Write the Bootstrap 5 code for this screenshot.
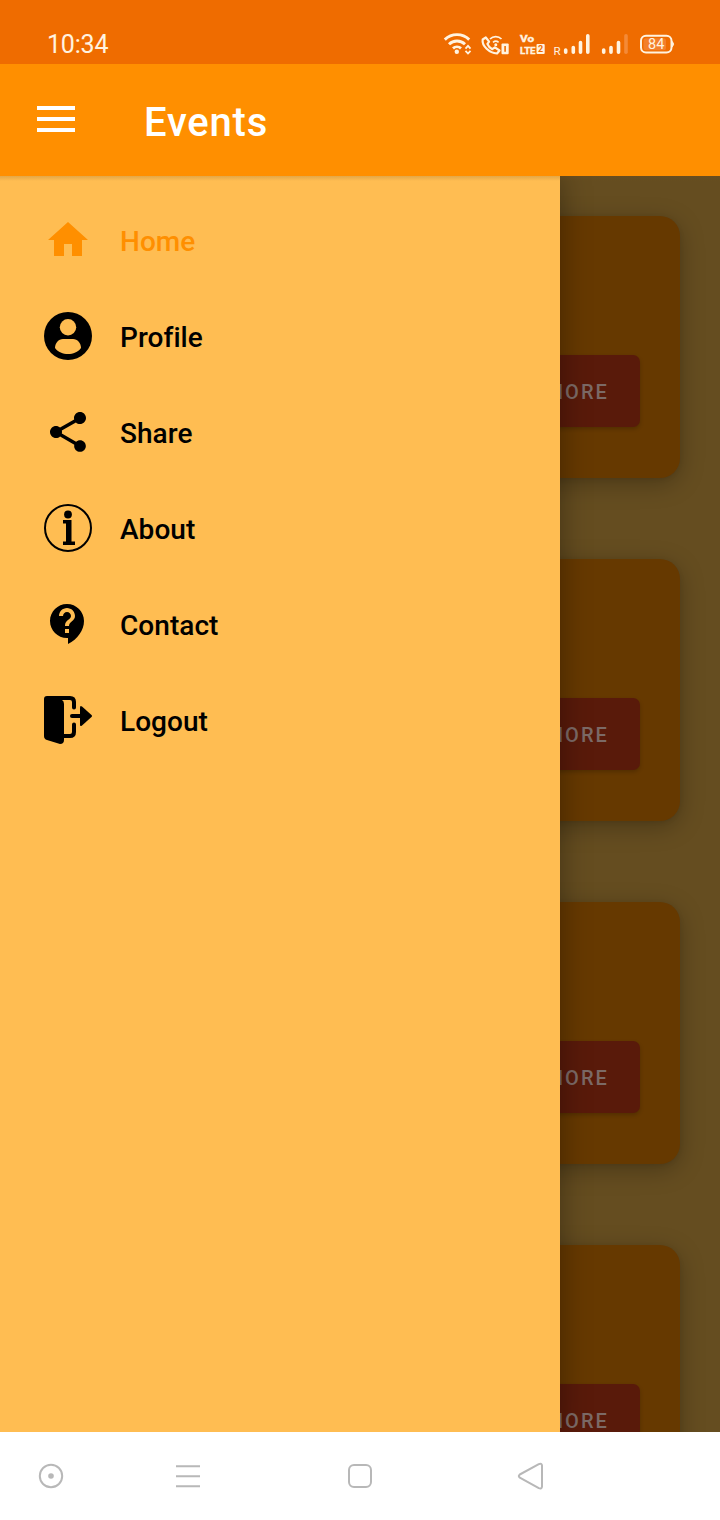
<!DOCTYPE html>
<html lang="en">
<head>
<meta charset="utf-8">
<meta name="viewport" content="width=device-width, initial-scale=1">
<title>Events</title>
<link href="https://cdn.jsdelivr.net/npm/bootstrap@5.3.0/dist/css/bootstrap.min.css" rel="stylesheet">
<style>
  body { font-family: Roboto, "Liberation Sans", sans-serif; }
  svg { display: block; flex-shrink: 0; }
  .screen { height: 1520px; width: 720px; }
  .status-bar { height: 64px; background: #ef6c00; padding-left: 47px; padding-right: 40px; color: #fff3e0; }
  .clock { font-size: 25px; line-height: 30px; padding-top: 30px; letter-spacing: -.2px; }
  .app-bar { height: 112px; background: #ff8f00; padding-left: 37px; }
  .app-title { font-size: 40px; font-weight: 500; line-height: 48px; margin: 5px 0 0 69px; letter-spacing: .8px; }
  .menu-icon { margin-top: -3px; }
  .stage { height: 1256px; background: #654d20; }
  .event-list { padding: 40px; gap: 81px; }
  .event-card { height: 262px; flex-shrink: 0; background: #663900; border-radius: 20px; padding: 0 40px 51px; box-shadow: 0 6px 24px rgba(0,0,0,.26), 0 1px 5px rgba(0,0,0,.08); }
  .more-btn { width: 176px; height: 72px; border-radius: 7px; background: #591a0a; color: #7c6a66; font-size: 20px; font-weight: 500; letter-spacing: 2.1px; padding: 2px 31px 0 0; border: 0; box-shadow: 0 2px 4px rgba(0,0,0,.2); }
  .drawer { width: 560px; background: #ffbd52; padding-top: 16px; box-shadow: 0 0 28px rgba(0,0,0,.36); }
  .bar-shade { height: 5px; background: linear-gradient(rgba(120,80,30,.2), rgba(120,80,30,0)); }
  .drawer-link { height: 96px; padding: 0 0 0 44px; gap: 28px; font-size: 28px; font-weight: 500; color: #000; line-height: 34px; letter-spacing: .05px; }
  .drawer-link span { padding-top: 3px; }
  .drawer-link.active { color: #ff8f00; }
  .sys-nav { height: 88px; background: #fff; padding-left: 37px; }
</style>
</head>
<body class="m-0">
<div class="screen d-flex flex-column overflow-hidden">
  <header class="status-bar d-flex justify-content-between">
    <div class="clock">10:34</div>
    <svg width="240" height="64" viewBox="440 0 240 64" fill="none" stroke="#fff3e0" font-family="Roboto, sans-serif">
      <!-- wifi -->
      <g stroke-width="2.9">
        <path d="M444.8 39.6a17.5 17.5 0 0 1 24.4 0M449 44.2a11.5 11.5 0 0 1 16 0M453 48.4a6 6 0 0 1 8 0"/>
        <circle cx="456.8" cy="51.8" r="2.2" fill="#fff3e0" stroke="none"/>
        <path d="M465.5 48.6l2.5-2.7 2.5 2.7M465.5 50.8l2.5 2.7 2.5-2.7" stroke-width="1.8"/>
      </g>
      <!-- wifi calling -->
      <path d="M485.8 37.500l-3.100 2c-1 6.600 6.700 13.400 14.300 14l2.500-3-4.600-3.200-2.600 1.900c-2.500-1.200-4-3-4.900-5.300l1.700-2.300z" stroke-width="2.200" stroke-linejoin="round"/>
      <path d="M490 39a8 8 0 0 1 11.500 0M493 42.300a4.500 4.500 0 0 1 5.600 0" stroke-width="1.700"/>
      <circle cx="495.800" cy="44.800" r="1.500" fill="#fff3e0" stroke="none"/>
      <rect x="501.500" y="43.600" width="7.200" height="10.600" rx="1" fill="#fff3e0" stroke="none"/><path d="M505.100 46v5.800" stroke="#ef6c00" stroke-width="1.600"/>
      <!-- VoLTE -->
      <g fill="#fff3e0" stroke="none" font-weight="700">
        <g stroke="#fff3e0" stroke-width=".4" font-size="9.400">
          <text x="520" y="42.300" textLength="14" lengthAdjust="spacingAndGlyphs">Vo</text>
          <text x="520" y="53.500" textLength="15.500" lengthAdjust="spacingAndGlyphs">LTE</text>
        </g>
        <rect x="536.500" y="44" width="8.200" height="10" rx="1"/>
        <text x="538" y="52.300" font-size="9" fill="#ef6c00">2</text>
        <text x="553.500" y="54.600" font-size="11.500" font-weight="400">R</text>
      </g>
      <!-- signal strength -->
      <g stroke-width="3.600" stroke-linecap="round">
        <path d="M565.700 50.100v2.200M573.300 47.500v4.800M580.500 42.500v9.800M587.800 35.800v16.500M603.700 50.100v2.200M611 47.500v4.800M618.500 42.500v9.800"/>
        <path d="M626 35.800v16.500" stroke="#f48a37"/>
      </g>
      <!-- battery -->
      <rect x="641" y="35.800" width="30.500" height="16.800" rx="5" stroke-width="2"/>
      <path d="M672.300 41.500q2.600 2.600 0 5.300z" fill="#fff3e0" stroke-width="1"/>
      <rect x="643.500" y="38.200" width="22.500" height="12" rx="2.500" fill="#f3802b" stroke="none"/>
      <text x="648" y="49" font-size="14.500" fill="#fff3e0" stroke="none">84</text>
    </svg>
  </header>

  <nav class="app-bar d-flex align-items-center text-white">
    <svg class="menu-icon" width="38" height="28" viewBox="0 0 38 28" fill="#fff"><path d="M0 1h38v4H0zM0 12h38v4H0zM0 23h38v4H0z"/></svg>
    <h1 class="app-title mb-0">Events</h1>
  </nav>

  <main class="stage position-relative overflow-hidden">
    <div class="event-list d-flex flex-column">
      <div class="event-card d-flex align-items-end justify-content-end"><button class="more-btn text-end">MORE</button></div>
      <div class="event-card d-flex align-items-end justify-content-end"><button class="more-btn text-end">MORE</button></div>
      <div class="event-card d-flex align-items-end justify-content-end"><button class="more-btn text-end">MORE</button></div>
      <div class="event-card d-flex align-items-end justify-content-end"><button class="more-btn text-end">MORE</button></div>
    </div>
    <aside class="drawer position-absolute top-0 start-0 h-100">
      <div class="nav flex-column">
        <a class="drawer-link active nav-link d-flex align-items-center" href="#">
          <svg width="48" height="48" viewBox="0 0 24 24" fill="currentColor"><path d="M10 20v-6h4v6h5v-8h3L12 3 2 12h3v8z"/></svg><span>Home</span></a>
        <a class="drawer-link nav-link d-flex align-items-center" href="#">
          <svg width="48" height="48" viewBox="0 0 48 48"><circle cx="24" cy="24" r="24"/><g fill="#ffbd52"><circle cx="24" cy="15.200" r="8.200"/><path d="M11 36c0-5 3.500-9 8-9h10c4.500 0 8 4 8 9-3 4-8 6-13 6s-10-2-13-6z"/></g></svg><span>Profile</span></a>
        <a class="drawer-link nav-link d-flex align-items-center" href="#">
          <svg width="48" height="48" viewBox="0 0 24 24" fill="currentColor"><path d="M18 16.080c-.76 0-1.440.3-1.960.77L8.910 12.700c.05-.23.09-.46.09-.7s-.04-.47-.09-.7l7.050-4.110c.54.5 1.250.81 2.040.81 1.660 0 3-1.340 3-3s-1.340-3-3-3-3 1.340-3 3c0 .24.04.47.09.7L8.040 9.810C7.500 9.310 6.790 9 6 9c-1.660 0-3 1.340-3 3s1.340 3 3 3c.79 0 1.500-.31 2.040-.81l7.120 4.160c-.05.21-.08.43-.08.65 0 1.610 1.310 2.920 2.920 2.920s2.920-1.310 2.920-2.920-1.310-2.920-2.920-2.920z"/></svg><span>Share</span></a>
        <a class="drawer-link nav-link d-flex align-items-center" href="#">
          <svg width="48" height="48" viewBox="0 0 48 48"><circle cx="24" cy="24" r="23" fill="none" stroke="#000" stroke-width="2"/><circle cx="24" cy="10.500" r="3.900"/><path d="M19 16h8.500v21.500H31V41H19v-3.500h3V19.500h-3z"/></svg><span>About</span></a>
        <a class="drawer-link nav-link d-flex align-items-center" href="#">
          <svg width="48" height="48" viewBox="0 0 24 24" fill="currentColor"><path d="M11.500 2C6.810 2 3 5.810 3 10.500S6.810 19 11.500 19h.5v3c4.860-2.340 8-7 8-11.500C20 5.810 16.190 2 11.500 2zm1 14.500h-2v-2h2v2zm0-3.500h-2c0-3.250 3-3 3-5 0-1.100-.9-2-2-2s-2 .9-2 2h-2c0-2.210 1.790-4 4-4s4 1.790 4 4c0 2.500-3 2.750-3 5z"/></svg><span>Contact</span></a>
        <a class="drawer-link nav-link d-flex align-items-center" href="#">
          <svg width="48" height="48" viewBox="0 0 48 48"><path d="M3 0h15v4q2 1 2 4v36q0 4-4 4L3 44q-3-1-3-4V3q0-3 3-3z"/><path d="M17 2h9q4 0 4 4v5.500M30 28.500v7.500q0 4-4 4h-7" fill="none" stroke="#000" stroke-width="4" stroke-linecap="round"/><path d="M28 20h10" stroke="#000" stroke-width="4" stroke-linecap="round"/><path d="M36 11.500q0-2.500 2-1l9.500 8.500q1 1 0 2L38 29.500q-2 1.500-2-1z"/></svg><span>Logout</span></a>
      </div>
    </aside>
    <div class="bar-shade position-absolute top-0 start-0 w-100"></div>
  </main>

  <footer class="sys-nav d-flex align-items-center">
    <svg width="520" height="32" viewBox="37 1460 520 32" fill="none" stroke="#b8b8b8" stroke-width="2">
      <circle cx="51" cy="1476" r="11.200"/><circle cx="51" cy="1476" r="2.800" fill="#b8b8b8" stroke="none"/>
      <path d="M176 1466.300h24M176 1476.300h24M176 1486.300h24"/>
      <rect x="349" y="1465" width="22" height="22" rx="5"/>
      <path d="M519.800 1474.500l19-10.400q3-1.200 3.200 1.500v21q-.200 2.700-3.200 1.500l-19-10.400q-2-1.600 0-3.200z" stroke-linejoin="round"/>
    </svg>
  </footer>
</div>
<script src="https://cdn.jsdelivr.net/npm/bootstrap@5.3.0/dist/js/bootstrap.bundle.min.js"></script>
</body>
</html>
